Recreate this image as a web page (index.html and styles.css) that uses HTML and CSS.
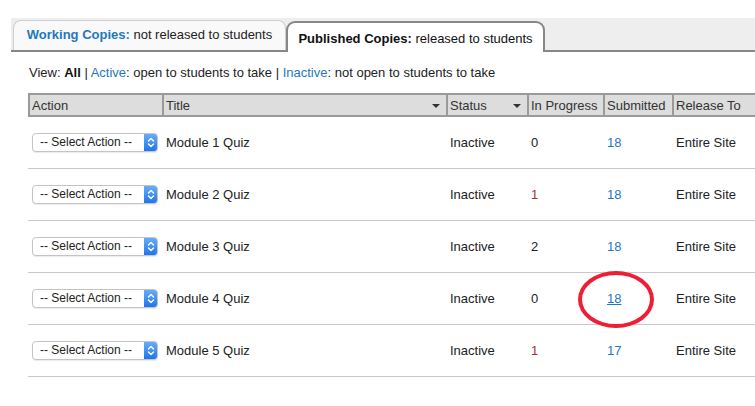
FILE: index.html
```html
<!DOCTYPE html>
<html>
<head>
<meta charset="utf-8">
<link rel="stylesheet" href="styles.css">
</head>
<body>
<div class="tabs">
  <div class="tab tab-working"><span class="tab-key link">Working Copies:</span> not released to students</div>
  <div class="tab tab-published"><span class="tab-key">Published Copies:</span> released to students</div>
</div>
<div class="view">View: <b>All</b> | <span class="link">Active</span>: open to students to take | <span class="link">Inactive</span>: not open to students to take</div>
<div class="grid">
  <div class="row head">
    <div class="cell">Action</div>
    <div class="cell sort">Title <span class="arrow"></span></div>
    <div class="cell sort">Status <span class="arrow"></span></div>
    <div class="cell">In Progress</div>
    <div class="cell">Submitted</div>
    <div class="cell">Release To</div>
  </div>
  <div class="row">
    <div class="cell act"><div class="select"><span class="sel-text">-- Select Action --</span><span class="sel-btn"><svg width="8" height="11" viewBox="0 0 8 11"><path d="M1.5 4 L4 1.5 L6.5 4 M1.5 7 L4 9.5 L6.5 7" fill="none" stroke="#fff" stroke-width="1.4" stroke-linecap="round" stroke-linejoin="round"/></svg></span></div></div>
    <div class="cell">Module 1 Quiz</div>
    <div class="cell">Inactive</div>
    <div class="cell">0</div>
    <div class="cell"><span class="link">18</span></div>
    <div class="cell">Entire Site</div>
  </div>
  <div class="row">
    <div class="cell act"><div class="select"><span class="sel-text">-- Select Action --</span><span class="sel-btn"><svg width="8" height="11" viewBox="0 0 8 11"><path d="M1.5 4 L4 1.5 L6.5 4 M1.5 7 L4 9.5 L6.5 7" fill="none" stroke="#fff" stroke-width="1.4" stroke-linecap="round" stroke-linejoin="round"/></svg></span></div></div>
    <div class="cell">Module 2 Quiz</div>
    <div class="cell">Inactive</div>
    <div class="cell red">1</div>
    <div class="cell"><span class="link">18</span></div>
    <div class="cell">Entire Site</div>
  </div>
  <div class="row">
    <div class="cell act"><div class="select"><span class="sel-text">-- Select Action --</span><span class="sel-btn"><svg width="8" height="11" viewBox="0 0 8 11"><path d="M1.5 4 L4 1.5 L6.5 4 M1.5 7 L4 9.5 L6.5 7" fill="none" stroke="#fff" stroke-width="1.4" stroke-linecap="round" stroke-linejoin="round"/></svg></span></div></div>
    <div class="cell">Module 3 Quiz</div>
    <div class="cell">Inactive</div>
    <div class="cell">2</div>
    <div class="cell"><span class="link">18</span></div>
    <div class="cell">Entire Site</div>
  </div>
  <div class="row">
    <div class="cell act"><div class="select"><span class="sel-text">-- Select Action --</span><span class="sel-btn"><svg width="8" height="11" viewBox="0 0 8 11"><path d="M1.5 4 L4 1.5 L6.5 4 M1.5 7 L4 9.5 L6.5 7" fill="none" stroke="#fff" stroke-width="1.4" stroke-linecap="round" stroke-linejoin="round"/></svg></span></div></div>
    <div class="cell">Module 4 Quiz</div>
    <div class="cell">Inactive</div>
    <div class="cell">0</div>
    <div class="cell circled"><span class="link under">18</span><span class="ring"></span></div>
    <div class="cell">Entire Site</div>
  </div>
  <div class="row">
    <div class="cell act"><div class="select"><span class="sel-text">-- Select Action --</span><span class="sel-btn"><svg width="8" height="11" viewBox="0 0 8 11"><path d="M1.5 4 L4 1.5 L6.5 4 M1.5 7 L4 9.5 L6.5 7" fill="none" stroke="#fff" stroke-width="1.4" stroke-linecap="round" stroke-linejoin="round"/></svg></span></div></div>
    <div class="cell">Module 5 Quiz</div>
    <div class="cell">Inactive</div>
    <div class="cell red">1</div>
    <div class="cell"><span class="link">17</span></div>
    <div class="cell">Entire Site</div>
  </div>
</div>
</body>
</html>
```

FILE: styles.css
```css
html, body {
  margin: 0;
  padding: 0;
  background: #fff;
  overflow: hidden;
}
body {
  width: 755px;
  height: 406px;
  font-family: "Liberation Sans", Arial, sans-serif;
  font-size: 13px;
  color: #222;
}
.link { color: #1f78c0; }
.under { text-decoration: underline; }
.red { color: #a8302c; }

.tabs {
  margin: 18px 0 0 11px;
  height: 32px;
  background: #eeeeee;
  border-bottom: 2px solid #878787;
  display: flex;
  align-items: flex-end;
  padding-left: 2px;
}
.tab {
  box-sizing: border-box;
  text-align: center;
  white-space: nowrap;
}
.tab-key { font-weight: bold; }
.tab-working {
  width: 273px;
  height: 30px;
  line-height: 28px;
  background: #f9f9f9;
  border: 1px solid #cfcfcf;
  border-bottom: none;
  border-radius: 8px 8px 0 0;
}
.tab-published {
  width: 259px;
  height: 31px;
  line-height: 30px;
  padding-top: 1px;
  margin-bottom: -2px;
  background: #fff;
  border: 2px solid #878787;
  border-bottom: none;
  border-radius: 9px 9px 0 0;
  color: #111;
}

.view {
  margin: 13px 0 0 29px;
  line-height: 16px;
  color: #222;
}
.view b { color: #111; }

.grid {
  margin: 12px 0 0 28px;
  width: 760px;
}
.row {
  display: grid;
  grid-template-columns: 134px 284px 81px 76px 69px 1fr;
  height: 51px;
  border-bottom: 1px solid #c9c9c9;
  align-items: center;
}
.row .cell {
  padding-left: 4px;
  white-space: nowrap;
  position: relative;
}
.row.head {
  height: 20px;
  background: #dddddd;
  border-top: 2px solid #9a9a9a;
  border-bottom: 2px solid #9a9a9a;
  align-items: stretch;
  color: #333;
}
.row.head .cell {
  border-left: 2px solid #9a9a9a;
  padding-left: 2px;
  line-height: 21px;
}
.row.head .cell.sort {
  display: flex;
  justify-content: space-between;
  align-items: center;
  padding-right: 6px;
}
.arrow {
  width: 0;
  height: 0;
  border-left: 4px solid transparent;
  border-right: 4px solid transparent;
  border-top: 4px solid #333;
}

.cell.act { padding-left: 4px; }
.select {
  box-sizing: border-box;
  width: 126px;
  height: 19px;
  border: 1px solid #c4c4c4;
  border-radius: 4px;
  background: #fff;
  display: flex;
  align-items: stretch;
  box-shadow: 0 1px 1px rgba(0,0,0,0.08);
  overflow: hidden;
}
.sel-text {
  flex: 1;
  font-size: 12px;
  line-height: 17px;
  padding-left: 7px;
  color: #222;
}
.sel-btn {
  width: 14px;
  margin: -1px -1px -1px 0;
  background: linear-gradient(#69b0fb, #1d72ec);
  border-radius: 0 4px 4px 0;
  display: flex;
  align-items: center;
  justify-content: center;
}

.ring {
  position: absolute;
  left: -25px;
  top: -20px;
  width: 68px;
  height: 49px;
  border: 4px solid #ec1f34;
  border-radius: 50%;
}
```
